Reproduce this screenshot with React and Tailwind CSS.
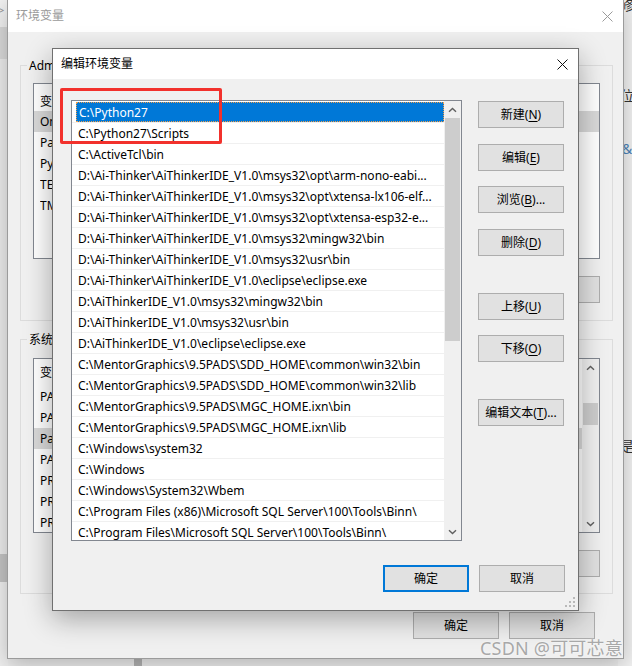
import React from 'react';

const FONT = "font-['Noto_Sans','Noto_Sans_CJK_SC',sans-serif]";

const pathRows = [
  'C:\\Python27',
  'C:\\Python27\\Scripts',
  'C:\\ActiveTcl\\bin',
  'D:\\Ai-Thinker\\AiThinkerIDE_V1.0\\msys32\\opt\\arm-nono-eabi...',
  'D:\\Ai-Thinker\\AiThinkerIDE_V1.0\\msys32\\opt\\xtensa-lx106-elf...',
  'D:\\Ai-Thinker\\AiThinkerIDE_V1.0\\msys32\\opt\\xtensa-esp32-e...',
  'D:\\Ai-Thinker\\AiThinkerIDE_V1.0\\msys32\\mingw32\\bin',
  'D:\\Ai-Thinker\\AiThinkerIDE_V1.0\\msys32\\usr\\bin',
  'D:\\Ai-Thinker\\AiThinkerIDE_V1.0\\eclipse\\eclipse.exe',
  'D:\\AiThinkerIDE_V1.0\\msys32\\mingw32\\bin',
  'D:\\AiThinkerIDE_V1.0\\msys32\\usr\\bin',
  'D:\\AiThinkerIDE_V1.0\\eclipse\\eclipse.exe',
  'C:\\MentorGraphics\\9.5PADS\\SDD_HOME\\common\\win32\\bin',
  'C:\\MentorGraphics\\9.5PADS\\SDD_HOME\\common\\win32\\lib',
  'C:\\MentorGraphics\\9.5PADS\\MGC_HOME.ixn\\bin',
  'C:\\MentorGraphics\\9.5PADS\\MGC_HOME.ixn\\lib',
  'C:\\Windows\\system32',
  'C:\\Windows',
  'C:\\Windows\\System32\\Wbem',
  'C:\\Program Files (x86)\\Microsoft SQL Server\\100\\Tools\\Binn\\',
  'C:\\Program Files\\Microsoft SQL Server\\100\\Tools\\Binn\\',
];

const userVars = [
  ['OneDrive', 'C:\\Users\\Administrator\\OneDrive'],
  ['Path', 'C:\\Users\\Administrator\\AppData\\Local\\Microsoft\\WindowsApps;'],
  ['PyCharm Community Edition', 'C:\\Program Files\\JetBrains\\PyCharm\\bin;'],
  ['TEMP', 'C:\\Users\\Administrator\\AppData\\Local\\Temp'],
  ['TMP', 'C:\\Users\\Administrator\\AppData\\Local\\Temp'],
];

const sysVars = [
  ['PADS_ROOT', 'C:\\MentorGraphics\\9.5PADS'],
  ['PADS_SYSTEM', 'C:\\MentorGraphics\\9.5PADS\\SDD_HOME'],
  ['Path', 'C:\\Python27;C:\\Python27\\Scripts;C:\\ActiveTcl\\bin;'],
  ['PATHEXT', '.COM;.EXE;.BAT;.CMD;.VBS;.VBE;.JS;.JSE;.WSF;.WSH;.MSC'],
  ['PROCESSOR_ARCHITECTURE', 'AMD64'],
  ['PROCESSOR_IDENTIFIER', 'Intel64 Family 6 Model 158'],
  ['PROCESSOR_LEVEL', '6'],
];

const Chevron = ({ down }) => (
  <svg width="9" height="6" viewBox="0 0 9 6">
    <path d={down ? 'M1 1.2 L4.5 4.6 L8 1.2' : 'M1 4.8 L4.5 1.4 L8 4.8'} fill="none" stroke="#606060" strokeWidth="1.4" />
  </svg>
);

const CloseX = ({ color }) => (
  <svg width="11" height="11" viewBox="0 0 11 11">
    <path d="M0.5 0.5 L10.5 10.5 M10.5 0.5 L0.5 10.5" stroke={color} strokeWidth="1" />
  </svg>
);

const Scrollbar = ({ thumbTop, thumbHeight }) => (
  <div className="w-[17px] flex flex-col bg-[#f0f0f0] shrink-0">
    <div className="h-[17px] flex items-center justify-center">
      <Chevron />
    </div>
    <div className="flex-1 flex flex-col">
      <div style={{ height: thumbTop }} />
      <div className="mx-[1px] bg-[#cdcdcd]" style={{ height: thumbHeight }} />
    </div>
    <div className="h-[17px] flex items-center justify-center">
      <Chevron down />
    </div>
  </div>
);

const WinButton = ({ pre, mnemonic, post = '', focused = false, className = '' }) => (
  <div
    className={`w-[86px] h-[27px] flex items-center justify-center bg-[#e1e1e1] text-[12px] text-black shrink-0 ${
      focused ? 'border-2 border-[#0078d7]' : 'border border-[#adadad]'
    } ${className}`}
  >
    <span>
      {pre}
      {mnemonic && (
        <>
          (<span className="underline underline-offset-2">{mnemonic}</span>)
        </>
      )}
      {post}
    </span>
  </div>
);

const VarList = ({ rows, highlight, height, scroll, headerClass }) => (
  <div className="mx-[6px] border border-[#828790] bg-white flex" style={{ height }}>
    <div className="flex-1 min-w-0 text-[12px] text-black">
      <div className={`h-[27px] flex items-center pl-[6px] ${headerClass}`}>
        <span className="w-[130px]">变量</span>
        <span>值</span>
      </div>
      {rows.map(([name, value], i) => (
        <div
          key={name + i}
          className={`h-[21px] flex items-center pl-[6px] whitespace-nowrap ${i === highlight ? 'bg-[#d9d9d9]' : ''}`}
        >
          <span className="w-[130px] overflow-hidden">{name}</span>
          <span className="overflow-hidden">{value}</span>
        </div>
      ))}
    </div>
    {scroll && <Scrollbar thumbTop={27} thumbHeight={22} />}
  </div>
);

const GroupBox = ({ title, children, className = '' }) => (
  <fieldset className={`ml-[12px] w-[593px] border border-[#dcdcdc] px-[6px] ${className}`}>
    <legend className="px-[2px] text-[12px] leading-[17px] text-black">{title}</legend>
    {children}
  </fieldset>
);

const OuterDialog = () => (
  <div className="absolute left-[7px] top-[-1px] w-[617px] h-[660px] border border-[#9b9b9b] bg-[#f0f0f0] flex flex-col shadow-[0_6px_22px_rgba(0,0,0,0.25)]">
    <div className="h-[32px] bg-white flex items-center justify-between pl-[8px] pr-[10px] shrink-0">
      <span className="text-[12px] text-[#9a9a9a]">环境变量</span>
      <CloseX color="#9a9a9a" />
    </div>
    <div className="flex flex-col">
      <GroupBox title="Administrator 的用户变量(U)" className="mt-[25px] pb-[17px]">
        <div className="mt-[9px]">
          <VarList rows={userVars} highlight={0} height={176} headerClass="pt-[8px]" />
        </div>
        <div className="mt-[17px] flex justify-end gap-[10px] mr-[6px]">
          <WinButton pre="新建" mnemonic="N" post="..." />
          <WinButton pre="编辑" mnemonic="E" post="..." />
          <WinButton pre="删除" mnemonic="D" />
        </div>
      </GroupBox>
      <GroupBox title="系统变量(S)" className="mt-[10px] pb-[16px]">
        <div className="mt-[10px]">
          <VarList rows={sysVars} highlight={2} height={175} scroll headerClass="pt-[1px]" />
        </div>
        <div className="mt-[17px] flex justify-end gap-[10px] mr-[6px]">
          <WinButton pre="新建" mnemonic="W" post="..." />
          <WinButton pre="编辑" mnemonic="I" post="..." />
          <WinButton pre="删除" mnemonic="L" />
        </div>
      </GroupBox>
      <div className="mt-[18px] flex justify-end gap-[10px] mr-[28px]">
        <WinButton pre="确定" />
        <WinButton pre="取消" />
      </div>
    </div>
  </div>
);

const InnerDialog = () => (
  <div className="absolute left-[52px] top-[48px] w-[527px] h-[563px] border border-[#707070] bg-[#f0f0f0] flex flex-col shadow-[0_8px_26px_rgba(0,0,0,0.32)]">
    <div className="h-[30px] bg-white flex items-center justify-between pl-[8px] pr-[10px] shrink-0">
      <span className="text-[12px] text-black">编辑环境变量</span>
      <CloseX color="#111111" />
    </div>
    <div className="flex pl-[18px] pt-[21px]">
      <div className="w-[391px] h-[441px] border border-[#828790] bg-white flex overflow-hidden shrink-0">
        <div className="flex-1 min-w-0 pt-[1px] text-[12px] text-black">
          {pathRows.map((p, i) => (
            <div key={p} className="h-[21px] flex items-center border-b border-[#f0f0f0] whitespace-nowrap overflow-hidden">
              <div
                className={`ml-[4px] flex-1 h-[20px] flex items-center pl-[2px] pt-[1px] ${
                  i === 0 ? 'bg-[#0078d7] text-white border border-dotted border-[#f3a04a]' : ''
                }`}
              >
                {p}
              </div>
            </div>
          ))}
        </div>
        <Scrollbar thumbTop={0} thumbHeight={223} />
      </div>
      <div className="ml-[16px] pt-[1px] flex flex-col">
        <WinButton pre="新建" mnemonic="N" />
        <WinButton pre="编辑" mnemonic="E" className="mt-[16px]" />
        <WinButton pre="浏览" mnemonic="B" post="..." className="mt-[15px]" />
        <WinButton pre="删除" mnemonic="D" className="mt-[16px]" />
        <WinButton pre="上移" mnemonic="U" className="mt-[37px]" />
        <WinButton pre="下移" mnemonic="O" className="mt-[15px]" />
        <WinButton pre="编辑文本" mnemonic="T" post="..." className="mt-[37px]" />
      </div>
    </div>
    <div className="mt-[24px] flex justify-end gap-[10px] pr-[13px]">
      <WinButton pre="确定" focused />
      <WinButton pre="取消" />
    </div>
    <div className="flex-1 flex items-end justify-end pr-[3px] pb-[3px]">
      <svg width="10" height="10" viewBox="0 0 10 10">
        <g fill="#b9b9b9">
          <rect x="8" y="0" width="2" height="2" />
          <rect x="4" y="4" width="2" height="2" />
          <rect x="8" y="4" width="2" height="2" />
          <rect x="0" y="8" width="2" height="2" />
          <rect x="4" y="8" width="2" height="2" />
          <rect x="8" y="8" width="2" height="2" />
        </g>
      </svg>
    </div>
  </div>
);

export default function App() {
  return (
    <div className={`relative w-[632px] h-[666px] overflow-hidden bg-[#eeeeee] ${FONT}`}>
      {/* desktop behind: left strip */}
      <div className="absolute left-0 top-0 w-[8px] h-[666px] flex flex-col">
        <div className="h-[27px] bg-[#f2f2f2] text-[13px] leading-[20px] text-[#999] -ml-[3px]">&gt;</div>
        <div className="h-[32px] bg-[#dadada]" />
        <div className="h-[495px] bg-[#ececec]" />
        <div className="h-[28px] bg-[#c4c4c4]" />
        <div className="flex-1 bg-[#f0f0f0]" />
      </div>
      {/* window behind on the right */}
      <div className="absolute left-[618px] top-0 w-[30px] h-[666px] bg-[#f3f3f3] text-[14px] text-[#333]">
        <div className="-mt-[6px] ml-[2px]">修</div>
        <div className="mt-[70px] ml-[2px]">位</div>
        <div className="mt-[32px] ml-[4px] text-[#4a82b8]">&amp;</div>
        <div className="mt-[276px] ml-[2px]">是</div>
      </div>
      <div className="absolute left-[83px] top-0 w-[397px] h-[2px] bg-[#3a3a3a]" />
      <div className="absolute left-[134px] top-[658px] w-[8px] h-[8px] bg-[#b3b3b3]" />

      <OuterDialog />
      <InnerDialog />

      {/* red annotation */}
      <div className="absolute left-[60px] top-[88px] w-[162px] h-[56px] border-[3px] border-[#f2312c] rounded-[2px]" />

      {/* watermark */}
      <div className="absolute left-[480px] top-[635px] text-[18px] tracking-[0.2px] text-[#a8a8a8] [text-shadow:0_0_2px_#ffffff] whitespace-nowrap">
        CSDN @可可芯意
      </div>
    </div>
  );
}
